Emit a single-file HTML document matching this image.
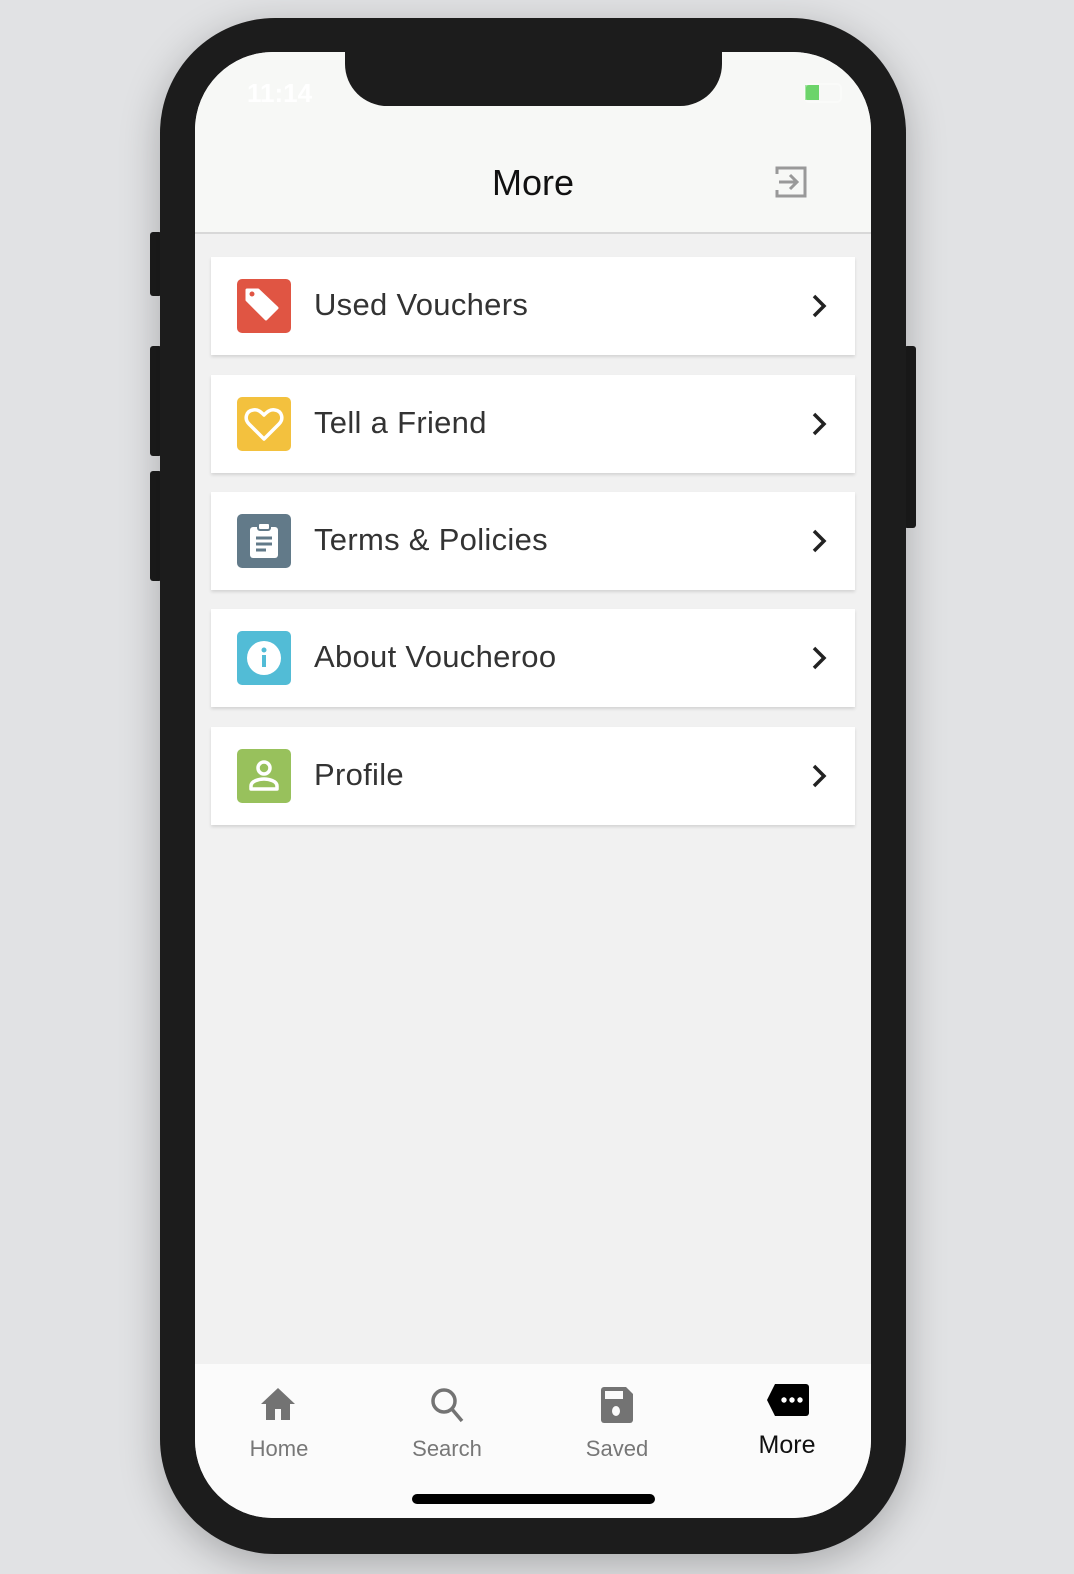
<!DOCTYPE html>
<html><head><style>
*{margin:0;padding:0;box-sizing:border-box}
body{width:1074px;height:1574px;background:#e1e2e4;position:relative;overflow:hidden;font-family:"Liberation Sans",sans-serif}
.abs{position:absolute}
.phone{left:160px;top:18px;width:746px;height:1536px;background:#1c1c1c;border-radius:115px;box-shadow:0 10px 40px rgba(0,0,0,.25)}
.screen{left:195px;top:52px;width:676px;height:1466px;background:#f1f1f1;border-radius:78px;overflow:hidden}
.notch{left:150px;top:-2px;width:377px;height:56px;background:#1c1c1c;border-radius:0 0 42px 42px}
.header{left:0;top:0;width:676px;height:182px;background:#f7f8f6;border-bottom:2px solid #d8d8d8}
.card{left:16px;width:644px;height:98px;background:#fff;box-shadow:0 2px 3px rgba(0,0,0,.12)}
.ic{left:26px;top:22px;width:54px;height:54px;border-radius:5px}
.lbl{left:103px;top:30px;font-size:31px;color:#333;letter-spacing:.3px}
.chev{left:598px;top:36px}
.tab{top:1312px;left:0;width:676px;height:154px;background:#fbfbfb}
.tl{font-size:22px;color:#777;width:120px;text-align:center;top:72px}
.btn{background:#1c1c1c;border-radius:3px}
</style></head><body>
<div class="abs btn" style="left:150px;top:232px;width:12px;height:64px"></div>
<div class="abs btn" style="left:150px;top:346px;width:12px;height:110px"></div>
<div class="abs btn" style="left:150px;top:471px;width:12px;height:110px"></div>
<div class="abs btn" style="left:904px;top:346px;width:12px;height:182px"></div>
<div class="abs phone"></div>
<div class="abs screen">
 <div class="abs header">
  <div class="abs" style="left:52px;top:26px;font-size:26px;color:#fff;font-weight:bold">11:14</div>
  <div class="abs" style="left:0;width:676px;top:110px;text-align:center;font-size:36px;color:#111">More</div>
  <svg class="abs" style="left:578px;top:112px" width="36" height="36" viewBox="0 0 36 36"><path d="M4 10V4h28v28H4v-6" fill="none" stroke="#999" stroke-width="3"/><path d="M6 18h18M17 11l7 7-7 7" fill="none" stroke="#999" stroke-width="3"/></svg>
  <svg class="abs" style="left:608px;top:30px" width="40" height="22"><rect x="2" y="3" width="14" height="15" fill="#6cd46a"/><rect x="2" y="2" width="36" height="18" rx="4" fill="none" stroke="#fff" stroke-opacity=".4" stroke-width="2"/></svg>
 </div>
 <div class="abs notch"></div>

 <div class="abs card" style="top:205px">
  <div class="abs ic" style="background:#e05543"><svg width="54" height="54"><path d="M10 11v10l19 19 11-11-19-18z" fill="#fff" stroke="#fff" stroke-width="3" stroke-linejoin="round"/><circle cx="15" cy="15" r="2.5" fill="#e05543"/></svg></div>
  <div class="abs lbl">Used Vouchers</div>
  <svg class="abs chev" width="20" height="26"><path d="M5 3l10 10-10 10" fill="none" stroke="#222" stroke-width="3.5"/></svg>
 </div>
 <div class="abs card" style="top:323px">
  <div class="abs ic" style="background:#f3c13e"><svg width="54" height="54"><path d="M27 42L12 27c-5-5-3-13 4-14 5-1 8 2 11 5 3-3 6-6 11-5 7 1 9 9 4 14z" fill="none" stroke="#fff" stroke-width="3.5" stroke-linejoin="round"/></svg></div>
  <div class="abs lbl">Tell a Friend</div>
  <svg class="abs chev" width="20" height="26"><path d="M5 3l10 10-10 10" fill="none" stroke="#222" stroke-width="3.5"/></svg>
 </div>
 <div class="abs card" style="top:440px">
  <div class="abs ic" style="background:#627a89"><svg width="54" height="54"><rect x="13" y="13" width="28" height="31" rx="3" fill="#fff"/><rect x="21" y="9" width="12" height="7" rx="2" fill="#fff" stroke="#627a89" stroke-width="2"/><path d="M19 24h16M19 30h16M19 36h10" stroke="#627a89" stroke-width="3"/></svg></div>
  <div class="abs lbl">Terms &amp; Policies</div>
  <svg class="abs chev" width="20" height="26"><path d="M5 3l10 10-10 10" fill="none" stroke="#222" stroke-width="3.5"/></svg>
 </div>
 <div class="abs card" style="top:557px">
  <div class="abs ic" style="background:#52bcd6"><svg width="54" height="54"><circle cx="27" cy="27" r="17" fill="#fff"/><circle cx="27" cy="19" r="2.5" fill="#52bcd6"/><rect x="25" y="24" width="4" height="12" fill="#52bcd6"/></svg></div>
  <div class="abs lbl">About Voucheroo</div>
  <svg class="abs chev" width="20" height="26"><path d="M5 3l10 10-10 10" fill="none" stroke="#222" stroke-width="3.5"/></svg>
 </div>
 <div class="abs card" style="top:675px">
  <div class="abs ic" style="background:#98c15c"><svg width="54" height="54"><circle cx="27" cy="19" r="6" fill="none" stroke="#fff" stroke-width="3.5"/><path d="M14 40v-3c0-5 8-7 13-7s13 2 13 7v3z" fill="none" stroke="#fff" stroke-width="3.5" stroke-linejoin="round"/></svg></div>
  <div class="abs lbl">Profile</div>
  <svg class="abs chev" width="20" height="26"><path d="M5 3l10 10-10 10" fill="none" stroke="#222" stroke-width="3.5"/></svg>
 </div>

 <div class="abs tab">
  <svg class="abs" style="left:64px;top:22px" width="38" height="36"><path d="M19 2L2 18h5v16h9v-11h6v11h9V18h5z" fill="#737373"/></svg>
  <div class="abs tl" style="left:24px">Home</div>
  <svg class="abs" style="left:234px;top:22px" width="38" height="38"><circle cx="15" cy="15" r="11" fill="none" stroke="#737373" stroke-width="3.5"/><path d="M22 22l11 13" stroke="#737373" stroke-width="3.5"/></svg>
  <div class="abs tl" style="left:192px">Search</div>
  <svg class="abs" style="left:404px;top:22px" width="36" height="38"><path d="M2 4a3 3 0 013-3h22l7 7v26a3 3 0 01-3 3H5a3 3 0 01-3-3z" fill="#737373"/><rect x="6" y="5" width="18" height="8" fill="#fbfbfb"/><ellipse cx="17" cy="25" rx="4" ry="5" fill="#fbfbfb"/></svg>
  <div class="abs tl" style="left:362px">Saved</div>
  <svg class="abs" style="left:570px;top:18px" width="46" height="36"><path d="M10 2h31a3 3 0 013 3v26a3 3 0 01-3 3H10L2 18z" fill="#000"/><circle cx="19" cy="18" r="2.7" fill="#fff"/><circle cx="27" cy="18" r="2.7" fill="#fff"/><circle cx="35" cy="18" r="2.7" fill="#fff"/></svg>
  <div class="abs tl" style="left:532px;top:67px;font-size:25px;color:#111">More</div>
  <div class="abs" style="left:217px;top:130px;width:243px;height:10px;background:#000;border-radius:5px"></div>
 </div>
</div>
</body></html>
